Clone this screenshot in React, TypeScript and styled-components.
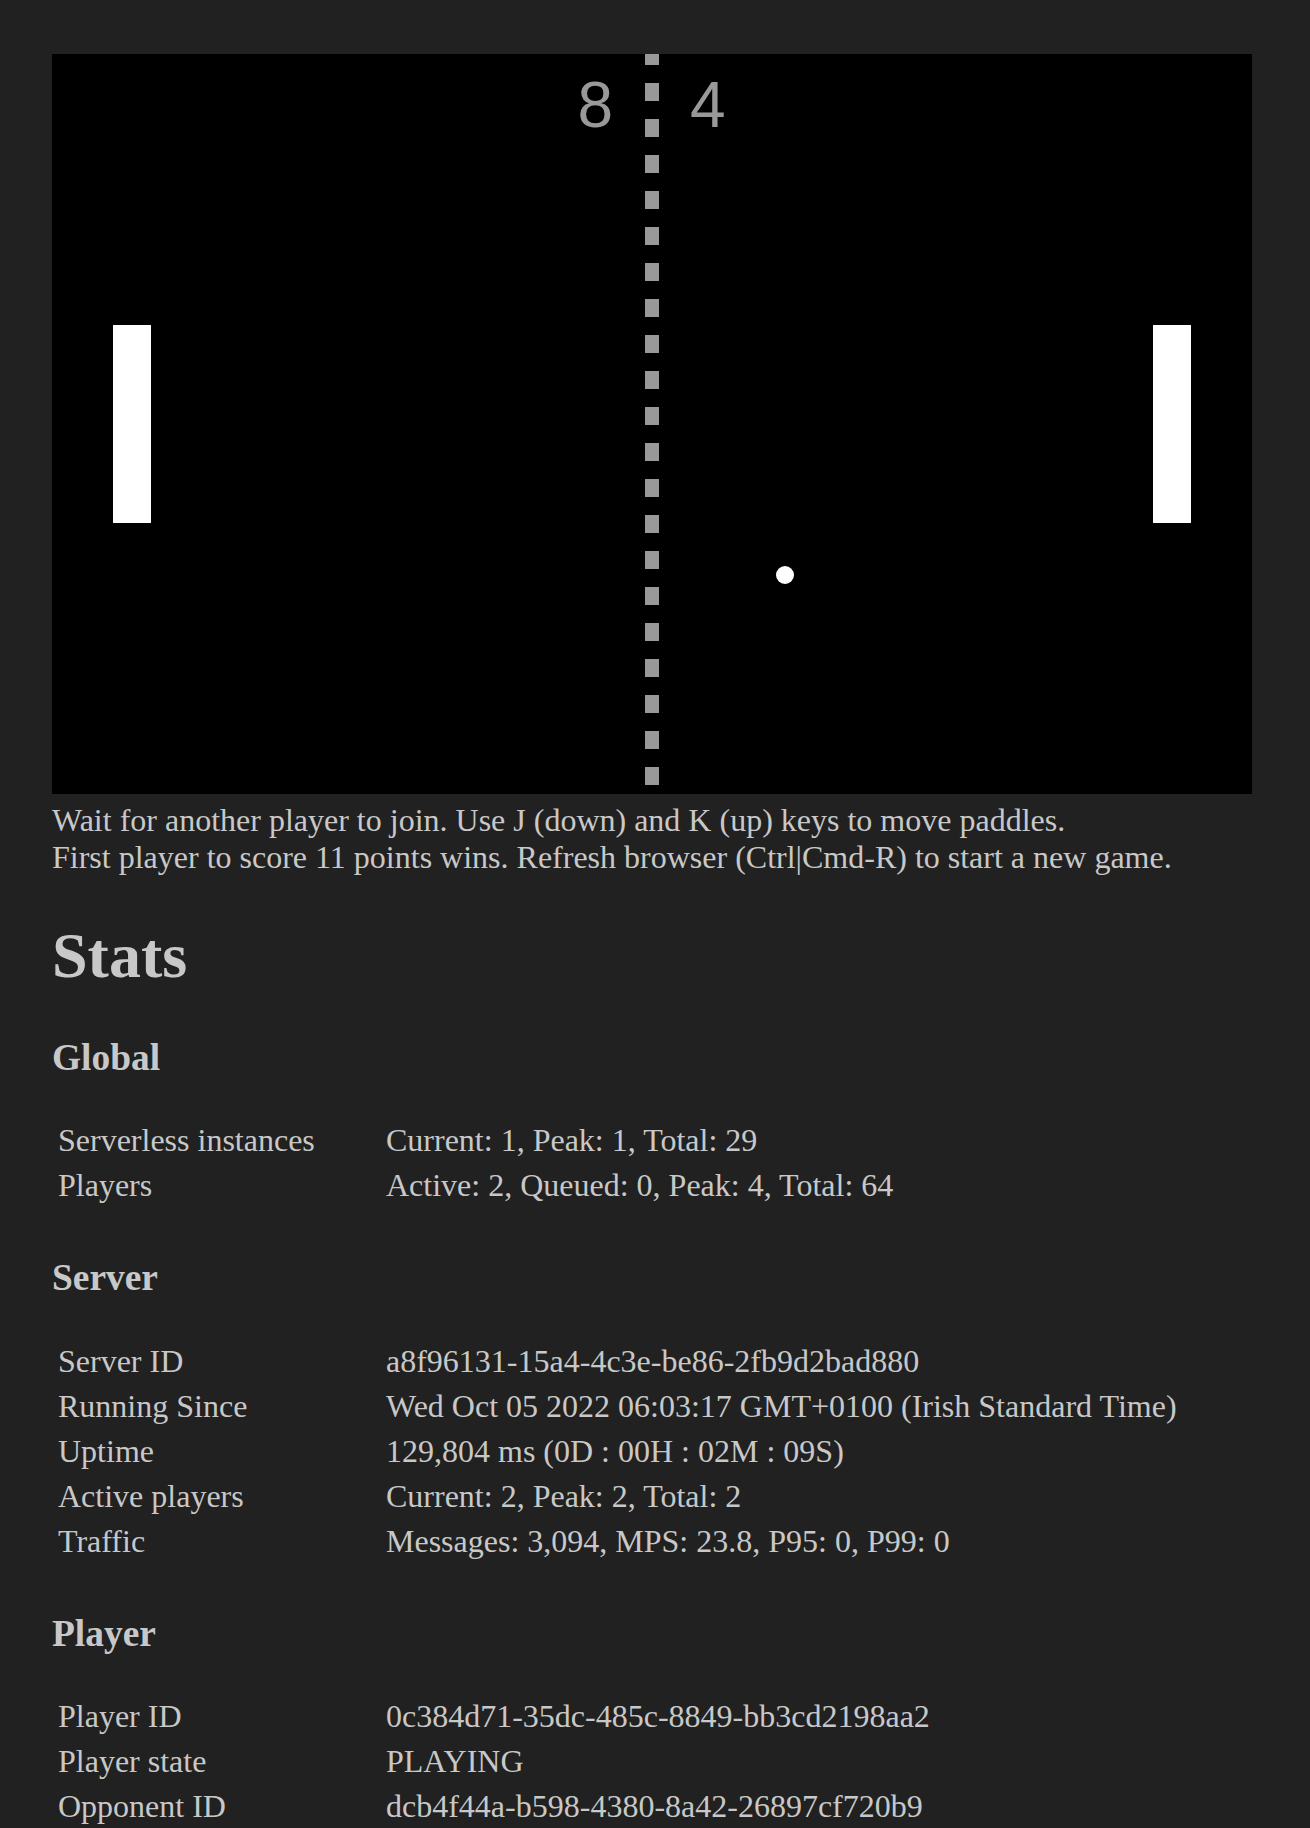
import React from "react";
import styled, { createGlobalStyle } from "styled-components";

const GlobalStyle = createGlobalStyle`
  html, body {
    margin: 0;
    background: #212121;
  }
  body {
    padding: 54px 52px 0 52px;
    color: #c8c8c8;
    font-family: "Liberation Serif", "Times New Roman", serif;
    font-size: 32px;
    line-height: normal;
  }
`;

const W = 1200;
const H = 740;

const Board = styled.svg`
  display: inline-block;
  vertical-align: baseline;
  background: #000;
`;

const ScoreText = styled.text`
  font-family: "Liberation Sans", Arial, sans-serif;
  font-size: 64px;
  fill: #999999;
`;

const Instructions = styled.div`
  margin: 0;
`;

const Title = styled.h1`
  font-size: 64px;
  font-weight: bold;
  margin: 42.88px 0;
  line-height: normal;
`;

const SectionTitle = styled.h3`
  font-size: 37.44px;
  font-weight: bold;
  margin: 37.44px 0;
  line-height: normal;
`;

const StatsTable = styled.table`
  border-spacing: 4px;
  margin: 0 0 46px 0;
  font-size: 32px;
  color: #c8c8c8;
`;

const Label = styled.td`
  width: 320px;
  padding: 2px;
  vertical-align: top;
`;

const Value = styled.td`
  padding: 2px;
  vertical-align: top;
`;

type Row = [string, string];

const sections: { title: string; rows: Row[] }[] = [
  {
    title: "Global",
    rows: [
      ["Serverless instances", "Current: 1, Peak: 1, Total: 29"],
      ["Players", "Active: 2, Queued: 0, Peak: 4, Total: 64"],
    ],
  },
  {
    title: "Server",
    rows: [
      ["Server ID", "a8f96131-15a4-4c3e-be86-2fb9d2bad880"],
      ["Running Since", "Wed Oct 05 2022 06:03:17 GMT+0100 (Irish Standard Time)"],
      ["Uptime", "129,804 ms (0D : 00H : 02M : 09S)"],
      ["Active players", "Current: 2, Peak: 2, Total: 2"],
      ["Traffic", "Messages: 3,094, MPS: 23.8, P95: 0, P99: 0"],
    ],
  },
  {
    title: "Player",
    rows: [
      ["Player ID", "0c384d71-35dc-485c-8849-bb3cd2198aa2"],
      ["Player state", "PLAYING"],
      ["Opponent ID", "dcb4f44a-b598-4380-8a42-26897cf720b9"],
    ],
  },
];

function PongBoard() {
  const dashes: number[] = [];
  for (let k = -1; k < 21; k++) dashes.push(29 + 36 * k);
  return (
    <Board width={W} height={H} viewBox={`0 0 ${W} ${H}`}>
      {dashes.map((y) => (
        <rect key={y} x={593} y={y} width={14} height={18} fill="#999999" />
      ))}
      <ScoreText x={561} y={73} textAnchor="end">
        8
      </ScoreText>
      <ScoreText x={638} y={73} textAnchor="start">
        4
      </ScoreText>
      <rect x={61} y={271} width={38} height={198} fill="#ffffff" />
      <rect x={1101} y={271} width={38} height={198} fill="#ffffff" />
      <circle cx={733} cy={521} r={9} fill="#ffffff" />
    </Board>
  );
}

export default function App() {
  return (
    <>
      <GlobalStyle />
      <div>
        <PongBoard />
        <Instructions>
          Wait for another player to join. Use J (down) and K (up) keys to move paddles.
          <br />
          First player to score 11 points wins. Refresh browser (Ctrl|Cmd-R) to start a new game.
        </Instructions>
      </div>
      <Title>Stats</Title>
      {sections.map((s) => (
        <section key={s.title}>
          <SectionTitle>{s.title}</SectionTitle>
          <StatsTable>
            <tbody>
              {s.rows.map(([k, v]) => (
                <tr key={k}>
                  <Label>{k}</Label>
                  <Value>{v}</Value>
                </tr>
              ))}
            </tbody>
          </StatsTable>
        </section>
      ))}
    </>
  );
}
